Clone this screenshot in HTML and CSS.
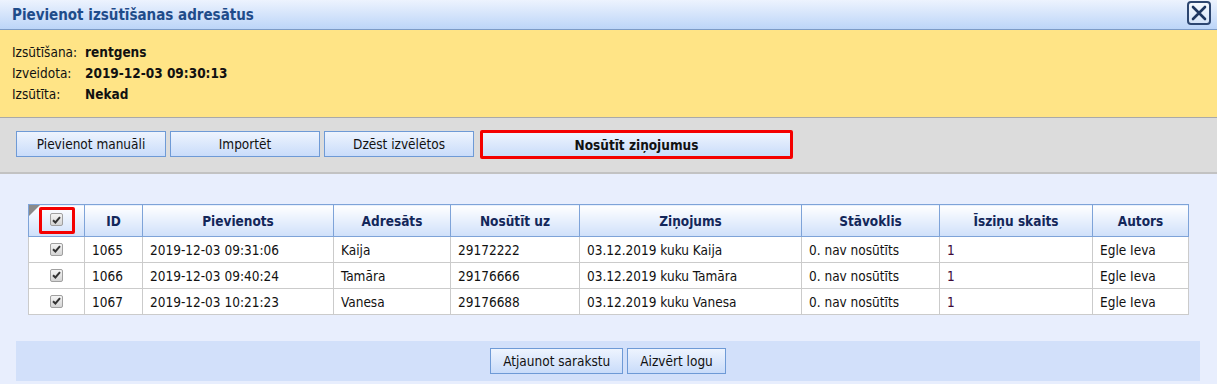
FILE: index.html
```html
<!DOCTYPE html>
<html lang="lv">
<head>
  <meta charset="UTF-8">
  <title>Pievienot izsūtīšanas adresātus</title>
  <link rel="stylesheet" href="styles.css">
</head>
<body>
  <div class="titlebar">
    <h1>Pievienot izsūtīšanas adresātus</h1>
    <button class="close" title="Aizvērt">
      <svg width="16" height="16" viewBox="0 0 16 16"><path d="M2 2 L14 14 M14 2 L2 14" stroke="#1d3660" stroke-width="2.6" stroke-linecap="round"/></svg>
    </button>
  </div>

  <div class="info">
    <div class="info-row"><span class="label">Izsūtīšana:</span><strong>rentgens</strong></div>
    <div class="info-row"><span class="label">Izveidota:</span><strong>2019-12-03 09:30:13</strong></div>
    <div class="info-row"><span class="label">Izsūtīta:</span><strong>Nekad</strong></div>
  </div>

  <div class="toolbar">
    <button class="btn">Pievienot manuāli</button>
    <button class="btn">Importēt</button>
    <button class="btn">Dzēst izvēlētos</button>
    <button class="btn btn-send">Nosūtīt ziņojumus</button>
  </div>

  <div class="content">
    <table class="grid">
      <thead>
        <tr>
          <th class="col-cb"><span class="corner"></span><span class="cb-mark"><span class="cb"><svg width="9" height="8" viewBox="0 0 9 8"><path d="M1 4.2 L3.4 6.5 L8 1.2" stroke="#333" stroke-width="2" fill="none"/></svg></span></span></th>
          <th class="col-id">ID</th>
          <th class="col-added">Pievienots</th>
          <th class="col-name">Adresāts</th>
          <th class="col-to">Nosūtīt uz</th>
          <th class="col-msg">Ziņojums</th>
          <th class="col-state">Stāvoklis</th>
          <th class="col-count">Īsziņu skaits</th>
          <th class="col-author">Autors</th>
        </tr>
      </thead>
      <tbody>
        <tr>
          <td class="center"><span class="cb"><svg width="9" height="8" viewBox="0 0 9 8"><path d="M1 4.2 L3.4 6.5 L8 1.2" stroke="#333" stroke-width="2" fill="none"/></svg></span></td>
          <td>1065</td>
          <td>2019-12-03 09:31:06</td>
          <td>Kaija</td>
          <td>29172222</td>
          <td>03.12.2019 kuku Kaija</td>
          <td>0. nav nosūtīts</td>
          <td class="count">1</td>
          <td>Egle Ieva</td>
        </tr>
        <tr>
          <td class="center"><span class="cb"><svg width="9" height="8" viewBox="0 0 9 8"><path d="M1 4.2 L3.4 6.5 L8 1.2" stroke="#333" stroke-width="2" fill="none"/></svg></span></td>
          <td>1066</td>
          <td>2019-12-03 09:40:24</td>
          <td>Tamāra</td>
          <td>29176666</td>
          <td>03.12.2019 kuku Tamāra</td>
          <td>0. nav nosūtīts</td>
          <td class="count">1</td>
          <td>Egle Ieva</td>
        </tr>
        <tr>
          <td class="center"><span class="cb"><svg width="9" height="8" viewBox="0 0 9 8"><path d="M1 4.2 L3.4 6.5 L8 1.2" stroke="#333" stroke-width="2" fill="none"/></svg></span></td>
          <td>1067</td>
          <td>2019-12-03 10:21:23</td>
          <td>Vanesa</td>
          <td>29176688</td>
          <td>03.12.2019 kuku Vanesa</td>
          <td>0. nav nosūtīts</td>
          <td class="count">1</td>
          <td>Egle Ieva</td>
        </tr>
      </tbody>
    </table>

    <div class="footer-bar">
      <button class="btn btn-small">Atjaunot sarakstu</button>
      <button class="btn btn-small">Aizvērt logu</button>
    </div>
  </div>
</body>
</html>
```

FILE: styles.css
```css
body {
  margin: 0;
  font-family: "DejaVu Sans Condensed", "DejaVu Sans", "Liberation Sans", sans-serif;
  font-size: 13.5px;
  color: #111;
  background: #e8eefd;
}
.titlebar {
  height: 29px;
  border-bottom: 1px solid #7d9bc6;
  background: linear-gradient(#edf3fe, #bcd5f8);
  display: flex;
  align-items: center;
  justify-content: space-between;
  padding: 0 6px 0 12px;
}
h1 {
  margin: 0;
  font-size: 15px;
  color: #1f4c8a;
}
.close {
  width: 24px;
  height: 24px;
  padding: 0;
  margin-top: -4px;
  border: 2px solid #2d4670;
  border-radius: 4px;
  background: linear-gradient(#f4f8fe, #d6e4f8);
  display: flex;
  align-items: center;
  justify-content: center;
}
.info {
  background: #ffe486;
  border-bottom: 1px solid #a9a9a9;
  padding: 12px 12px;
}
.info-row {
  line-height: 21px;
}
.info-row .label {
  display: inline-block;
  width: 73px;
}
.toolbar {
  background: #dcdcdc;
  border-bottom: 2px solid #c2c2c2;
  padding: 13px 16px 13px;
  display: flex;
  gap: 4px;
}
.btn {
  font-family: inherit;
  font-size: 13.5px;
  color: #111;
  height: 26px;
  border: 1px solid #6e9ad6;
  background: linear-gradient(#eef4fe, #c9dcfa);
  padding: 0;
}
.toolbar .btn {
  width: 150px;
}
.toolbar .btn-send {
  width: 313px;
  margin-left: 2px;
  margin-top: -1px;
  height: 29px;
  border: 3px solid #f40000;
  border-radius: 2px;
  font-weight: bold;
}
.content {
  padding: 30px 17px 4px 16px;
}
.grid {
  width: 1161px;
  margin-left: 12px;
  border-collapse: collapse;
  background: #fff;
}
.grid th {
  height: 31px;
  padding: 0;
  border: 1px solid #7ea3d8;
  background: linear-gradient(#ffffff, #cfe0fa);
  color: #13275a;
}
.grid td {
  height: 25px;
  padding: 0 7px;
  border: 1px solid #cbcbcb;
}
.grid td.center {
  text-align: center;
  padding: 0;
}
.grid td.count {
  color: #3e0a3a;
}
.col-cb { width: 55px; position: relative; }
.col-id { width: 57px; }
.col-added { width: 190px; }
.col-name { width: 116px; }
.col-to { width: 128px; }
.col-msg { width: 221px; }
.col-state { width: 137px; }
.col-count { width: 152px; }
.corner {
  position: absolute;
  left: 0;
  top: 0;
  width: 0;
  height: 0;
  border-top: 11px solid #8a8a8a;
  border-right: 11px solid transparent;
}
.cb-mark {
  display: inline-flex;
  align-items: center;
  justify-content: center;
  width: 30px;
  height: 21px;
  border: 3px solid #f40000;
  border-radius: 2px;
  vertical-align: middle;
}
.cb {
  display: inline-flex;
  align-items: center;
  justify-content: center;
  width: 11px;
  height: 11px;
  border: 1px solid #a0a0a0;
  border-radius: 2px;
  background: linear-gradient(#f4f4f4, #d4d4d4);
  vertical-align: middle;
  margin-top: -3px;
}
.cb-mark .cb {
  margin-top: -2px;
}
.footer-bar {
  margin-top: 26px;
  height: 40px;
  background: #d2e0fa;
  display: flex;
  align-items: center;
  justify-content: center;
  gap: 4px;
}
.btn-small {
  padding: 0 12px;
  height: 26px;
}
```
